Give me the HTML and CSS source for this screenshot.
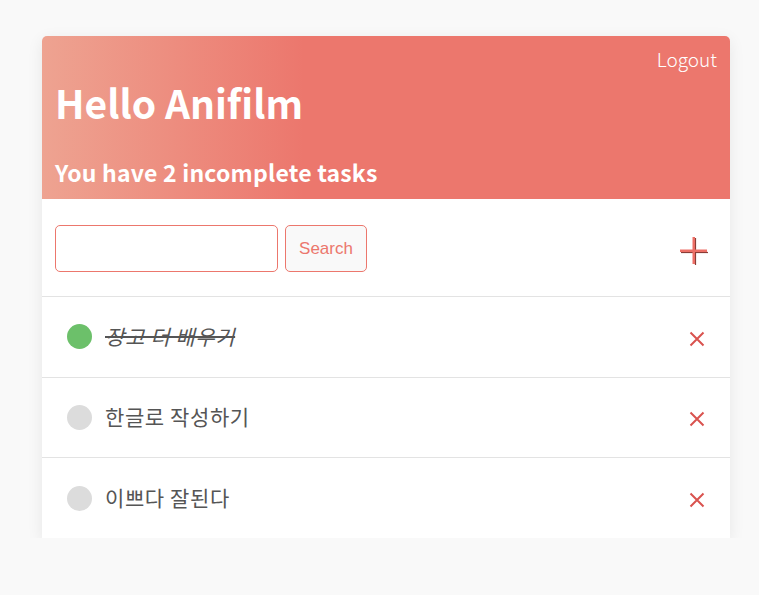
FILE: index.html
```html
<!DOCTYPE html>
<html>
<head>
<meta charset="utf-8">
<link rel="stylesheet" href="styles.css">
</head>
<body>
<div class="card">
  <header class="head">
    <div class="logout">Logout</div>
    <h1 class="title">Hello Anifilm</h1>
    <h2 class="sub">You have 2 incomplete tasks</h2>
  </header>
  <div class="toolbar">
    <input class="search-input" type="text">
    <button class="search-btn">Search</button>
    <span class="spacer"></span>
    <svg class="plus" width="30" height="30" viewBox="0 0 30 30">
      <line x1="16.5" y1="2" x2="16.5" y2="29" stroke="#8a3c36" stroke-width="1.2"/>
      <line x1="2" y1="16.5" x2="29" y2="16.5" stroke="#8a3c36" stroke-width="1.2"/>
      <line x1="14.75" y1="1" x2="14.75" y2="28" stroke="#ec6f66" stroke-width="2.5"/>
      <line x1="1" y1="14.75" x2="28" y2="14.75" stroke="#ec6f66" stroke-width="2.5"/>
    </svg>
  </div>
  <ul class="list">
    <li class="item">
      <span class="dot done"></span>
      <span class="text done-text">장고 더 배우기</span>
      <svg class="del" width="16" height="16" viewBox="0 0 16 16"><path d="M1.5 1.5L14.5 14.5M14.5 1.5L1.5 14.5" stroke="#d9534f" stroke-width="2"/></svg>
    </li>
    <li class="item">
      <span class="dot"></span>
      <span class="text">한글로 작성하기</span>
      <svg class="del" width="16" height="16" viewBox="0 0 16 16"><path d="M1.5 1.5L14.5 14.5M14.5 1.5L1.5 14.5" stroke="#d9534f" stroke-width="2"/></svg>
    </li>
    <li class="item">
      <span class="dot"></span>
      <span class="text">이쁘다 잘된다</span>
      <svg class="del" width="16" height="16" viewBox="0 0 16 16"><path d="M1.5 1.5L14.5 14.5M14.5 1.5L1.5 14.5" stroke="#d9534f" stroke-width="2"/></svg>
    </li>
  </ul>
</div>
</body>
</html>
```
FILE: styles.css
```css
html, body {
  margin: 0;
  padding: 0;
  background: #f9f9f9;
  font-family: "Noto Sans CJK KR", "Noto Sans", sans-serif;
}
.card {
  width: 688px;
  margin: 36px 0 0 42px;
  background: #fff;
  border-radius: 5px 5px 0 0;
  box-shadow: 0 4px 16px rgba(0,0,0,0.08);
}
.head {
  height: 163px;
  box-sizing: border-box;
  padding: 9px 13px 0 13px;
  border-radius: 5px 5px 0 0;
  background: linear-gradient(to right, #eea391 0%, #ec776d 38%, #ec776d 100%);
  color: #fff;
  display: flex;
  flex-direction: column;
}
.logout {
  align-self: flex-end;
  font-size: 19px;
  font-weight: 300;
  line-height: 28px;
}
.title {
  margin: 4px 0 0 0;
  font-size: 39px;
  font-weight: 700;
  line-height: 50px;
}
.sub {
  margin: 29px 0 0 0;
  font-size: 23px;
  font-weight: 700;
  line-height: 32px;
  letter-spacing: 0.2px;
}
.toolbar {
  height: 98px;
  box-sizing: border-box;
  border-bottom: 1px solid #e3e3e3;
  display: flex;
  align-items: center;
  padding: 0 21px 0 13px;
}
.search-input {
  width: 223px;
  height: 47px;
  box-sizing: border-box;
  border: 1px solid #ec776d;
  border-radius: 5px;
  margin: 2px 7px 0 0;
  padding: 0 8px;
  outline: none;
}
.search-btn {
  width: 82px;
  height: 47px;
  box-sizing: border-box;
  border: 1px solid #ec776d;
  border-radius: 5px;
  background: #f9f9f9;
  color: #ec776d;
  font-family: "Liberation Sans", Arial, sans-serif;
  font-size: 17px;
  padding: 0;
  margin-top: 2px;
}
.spacer { flex: 1; }
.plus { display: block; margin-top: 6px; }
.list {
  list-style: none;
  margin: 0;
  padding: 0;
}
.item {
  height: 80.5px;
  box-sizing: border-box;
  border-bottom: 1px solid #e3e3e3;
  display: flex;
  align-items: center;
  padding: 0 25px 0 25px;
}
.item:last-child { border-bottom: none; height: 80px; }
.dot {
  width: 25px;
  height: 25px;
  border-radius: 50%;
  background: #dcdcdc;
  margin-right: 13px;
  flex: none;
}
.dot.done { background: #6cc06a; }
.text {
  flex: 1;
  font-size: 21px;
  letter-spacing: 0.6px;
  color: #555;
  margin-top: -2px;
}
.done-text {
  font-style: italic;
  text-decoration: line-through;
  text-decoration-thickness: 2px;
}
.del { display: block; margin-top: 4px; }
```
